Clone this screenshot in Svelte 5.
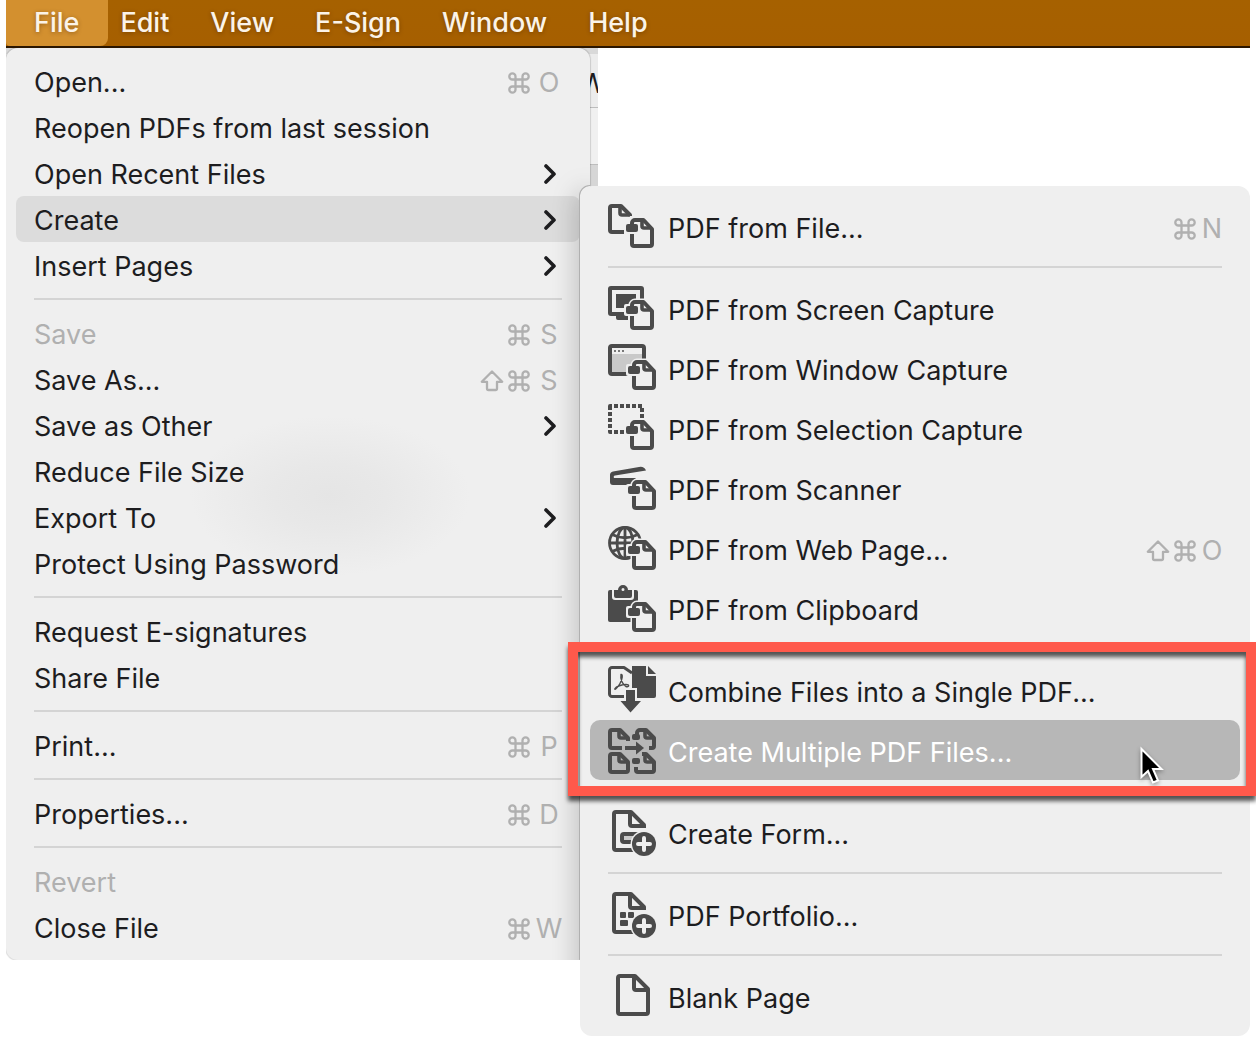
<script>
  const bar = ['File', 'Edit', 'View', 'E-Sign', 'Window', 'Help'];

  const fileGroups = [
    [
      { label: 'Open...', keys: ['⌘', 'O'] },
      { label: 'Reopen PDFs from last session' },
      { label: 'Open Recent Files', more: true },
      { label: 'Create', more: true, open: true },
      { label: 'Insert Pages', more: true }
    ],
    [
      { label: 'Save', keys: ['⌘', 'S'], disabled: true },
      { label: 'Save As...', keys: ['⇧', '⌘', 'S'] },
      { label: 'Save as Other', more: true },
      { label: 'Reduce File Size' },
      { label: 'Export To', more: true },
      { label: 'Protect Using Password' }
    ],
    [{ label: 'Request E-signatures' }, { label: 'Share File' }],
    [{ label: 'Print...', keys: ['⌘', 'P'] }],
    [{ label: 'Properties...', keys: ['⌘', 'D'] }],
    [
      { label: 'Revert', disabled: true },
      { label: 'Close File', keys: ['⌘', 'W'] }
    ]
  ];

  const createGroups = [
    { items: [{ label: 'PDF from File...', icon: 'file', keys: ['⌘', 'N'] }] },
    {
      items: [
        { label: 'PDF from Screen Capture', icon: 'screen' },
        { label: 'PDF from Window Capture', icon: 'window' },
        { label: 'PDF from Selection Capture', icon: 'selection' },
        { label: 'PDF from Scanner', icon: 'scanner' },
        { label: 'PDF from Web Page...', icon: 'web', keys: ['⇧', '⌘', 'O'] },
        { label: 'PDF from Clipboard', icon: 'clipboard' }
      ]
    },
    {
      callout: true,
      items: [
        { label: 'Combine Files into a Single PDF...', icon: 'combine' },
        { label: 'Create Multiple PDF Files...', icon: 'multiple', hover: true }
      ]
    },
    { items: [{ label: 'Create Form...', icon: 'form' }] },
    { items: [{ label: 'PDF Portfolio...', icon: 'portfolio' }] },
    { items: [{ label: 'Blank Page', icon: 'blank' }] }
  ];
</script>

{#snippet shortcut(keys)}
  <span class="keys">
    {#each keys as key}
      <kbd>
        {#if key === '⇧'}
          <svg class="key-icon" viewBox="0 0 24 24" role="img" aria-label="Shift">
            <path d="M12 2.5 1.8 12.8H7V19.5a1.5 1.5 0 0 0 1.5 1.5h7a1.5 1.5 0 0 0 1.5-1.5V12.8h5.2Z" />
          </svg>
        {:else if key === '⌘'}
          <svg class="key-icon" viewBox="0 0 24 24" role="img" aria-label="Command">
            <path d="M8.5 15.5V5.4A3.1 3.1 0 1 0 5.4 8.5H18.6A3.1 3.1 0 1 0 15.5 5.4V18.6A3.1 3.1 0 1 0 18.6 15.5H5.4A3.1 3.1 0 1 0 8.5 18.6Z" />
          </svg>
        {:else}
          {key}
        {/if}
      </kbd>
    {/each}
  </span>
{/snippet}

{#snippet badge(x, y)}
  <g transform="translate({x} {y})">
    <path class="halo" d="M2 14V26a2 2 0 0 0 2 2h16a2 2 0 0 0 2-2V10L14 2H5a3 3 0 0 0-3 3Z" />
    <rect class="clear" x="-6" y="4" width="15" height="12" rx="2" />
    <path class="line" d="M2 16V26a2 2 0 0 0 2 2h16a2 2 0 0 0 2-2V11L13.5 2H5a3 3 0 0 0-3 3V8" />
    <path class="line thin" d="M12 3V8a2 2 0 0 0 2 2h7" />
    <rect class="solid" x="-4" y="6" width="12" height="8" rx="2" />
  </g>
{/snippet}

{#snippet plus()}
  <circle class="clear" cx="36" cy="34" r="13.5" />
  <circle class="solid" cx="36" cy="34" r="12" />
  <path class="cross" d="M36 28v12M30 34h12" />
{/snippet}

{#snippet icon(name)}
  <svg class="icon" viewBox="0 0 48 48" aria-hidden="true">
    {#if name === 'file'}
      <path class="line" d="M16 28H4a2 2 0 0 1-2-2V4a2 2 0 0 1 2-2H13L22 11V12" />
      <path class="line thin" d="M12 3V9a2 2 0 0 0 2 2h8" />
      {@render badge(22, 14)}
    {:else if name === 'screen'}
      <rect class="line" x="2" y="2" width="32" height="26" rx="1" />
      <path class="solid" d="M8 8H28V22H8ZM11 30H20V34H10a2 2 0 0 1-2-2V30Z" />
      {@render badge(22, 14)}
    {:else if name === 'window'}
      <rect class="line tint" x="2" y="0" width="34" height="28" rx="2" />
      <path class="clear" d="M4 2H34V8H4Z" />
      <path class="dots" d="M6 5h2M10 5h2M14 5h2" />
      {@render badge(24, 14)}
    {:else if name === 'selection'}
      <rect class="line dashed" x="2" y="0" width="32" height="26" />
      {@render badge(22, 14)}
    {:else if name === 'scanner'}
      <path class="solid" d="M2 9Q2 6 5 5.4L31 1Q36 0 38 4.5L7 9.5Q5 10 6 12H28L22 19H5Q2 19 2 16Z" />
      {@render badge(24, 14)}
    {:else if name === 'web'}
      <circle class="globe" cx="17" cy="17" r="15.5" />
      <path class="globe" d="M17 1V33M1.5 17H32.5M4 8.5Q17 15 30 8.5M4 25.5Q17 19 30 25.5" />
      <ellipse class="globe" cx="17" cy="17" rx="8" ry="15.5" />
      {@render badge(24, 14)}
    {:else if name === 'clipboard'}
      <rect class="solid" x="0" y="4" width="30" height="32" rx="2" />
      <path class="clear" d="M4 3H26V11a3 3 0 0 1-3 3H7a3 3 0 0 1-3-3Z" />
      <path class="solid" fill-rule="evenodd" d="M6 4H10A5 5 0 0 1 20 4H24V10a2 2 0 0 1-2 2H8a2 2 0 0 1-2-2ZM13.5 3.5a1.5 1.5 0 0 0 3 0 1.5 1.5 0 0 0-3 0Z" />
      {@render badge(24, 16)}
    {:else if name === 'combine'}
      <path class="line fine" d="M25 28.5H4a2.5 2.5 0 0 1-2.5-2.5V2A2.5 2.5 0 0 1 4-.5H16L24 5" />
      <path class="curve" d="M13 6.5C15 6 14.5 11 12 15.5S6 22.5 7 20.5 14 16.5 18 16.5 21 19.5 18 18.5 12 11 13 6.5Z" />
      <path class="solid" d="M24-2H38V8H48V28a2 2 0 0 1-2 2H24ZM40-2 48 6H40Z" />
      <path class="arrow-edge" d="M18 22h9V33h6L22.5 44.5 12.5 33H18Z" />
      <path class="solid" d="M18 22h9V33h6L22.5 44.5 12.5 33H18Z" />
    {:else if name === 'multiple'}
      <path class="line" d="M14 20H4a2 2 0 0 1-2-2V4a2 2 0 0 1 2-2H12L20 10V13" />
      <path class="line thin" d="M11 3V8a2 2 0 0 0 2 2h6" />
      <path class="line" d="M29 10V5a3 3 0 0 1 3-3h6l8 8V18a2 2 0 0 1-2 2H41" />
      <path class="line thin" d="M37 3V8a2 2 0 0 0 2 2h6" />
      <rect class="solid" x="24" y="6" width="8" height="6" rx="2" />
      <path class="line" d="M2 28a2 2 0 0 1 2-2H12L20 34V42a2 2 0 0 1-2 2H4a2 2 0 0 1-2-2Z" />
      <path class="line thin" d="M11 27V32a2 2 0 0 0 2 2h6" />
      <path class="line" d="M28 39V42a2 2 0 0 0 2 2H44a2 2 0 0 0 2-2V34L38 26H34" />
      <path class="line thin" d="M37 27V32a2 2 0 0 0 2 2h6" />
      <rect class="solid" x="24" y="30" width="8" height="6" rx="2" />
      <path class="line" d="M17 20H29" />
      <path class="solid" d="M28 13.5 36 20 28 26.5Z" />
    {:else if name === 'form'}
      <path class="line" d="M30 40H8a2 2 0 0 1-2-2V4a2 2 0 0 1 2-2H23L36 15V18M22 3V14a2 2 0 0 0 2 2H35" />
      <rect class="line tint" x="14" y="24" width="18" height="8" rx="2" />
      {@render plus()}
    {:else if name === 'portfolio'}
      <path class="line" d="M30 40H8a2 2 0 0 1-2-2V4a2 2 0 0 1 2-2H23L36 15V18M22 3V14a2 2 0 0 0 2 2H35" />
      <rect class="solid" x="12" y="20" width="6" height="6" rx="1" />
      <rect class="solid" x="20" y="20" width="6" height="6" rx="1" />
      <rect class="solid" x="12" y="28" width="8" height="6" rx="1" />
      {@render plus()}
    {:else}
      <path class="line" d="M10 4a2 2 0 0 1 2-2H27L40 15V38a2 2 0 0 1-2 2H12a2 2 0 0 1-2-2ZM26 3V14a2 2 0 0 0 2 2H39" />
    {/if}
  </svg>
{/snippet}

<div class="screen">
  <nav class="menubar" aria-label="Application menu">
    {#each bar as name, i}
      <button type="button" class:active={i === 0}>{name}</button>
    {/each}
  </nav>

  <div class="stage">
    <div class="backdrop" aria-hidden="true"><span>W</span></div>

    <div class="menu file-menu" role="menu" aria-label="File">
      {#each fileGroups as group}
        <div class="group" role="group">
          {#each group as item}
            <button type="button" role="menuitem" class="row" class:open={item.open} disabled={item.disabled}>
              <span class="label">{item.label}</span>
              {#if item.keys}{@render shortcut(item.keys)}{/if}
              {#if item.more}
                <svg class="chevron" viewBox="0 0 12 20" aria-hidden="true"><path d="M2 2 10 10 2 18" /></svg>
              {/if}
            </button>
          {/each}
        </div>
      {/each}
    </div>

    <div class="menu create-menu" role="menu" aria-label="Create">
      {#each createGroups as group}
        <div class="group" class:callout={group.callout} role="group">
          {#each group.items as item}
            <button type="button" role="menuitem" class="row tall" class:hover={item.hover}>
              {@render icon(item.icon)}
              <span class="label">{item.label}</span>
              {#if item.keys}{@render shortcut(item.keys)}{/if}
              {#if item.hover}
                <svg class="pointer" viewBox="0 0 24 38" aria-hidden="true">
                  <path d="M1.5 2V30L8 24 13 35.5 18 33.5 13 22H21.5Z" />
                </svg>
              {/if}
            </button>
          {/each}
        </div>
      {/each}
    </div>
  </div>
</div>

<style>
  :global(body) {
    background: #fff;
  }

  .screen {
    padding: 0 6px;
    font-family: Inter, 'Liberation Sans', sans-serif;
    font-size: 27px;
    line-height: 32px;
    color: #1d1d1f;
  }

  button {
    border: 0;
    margin: 0;
    background: none;
    font: inherit;
    color: inherit;
    text-align: left;
    white-space: nowrap;
  }

  .menubar {
    display: flex;
    height: 46px;
    border-bottom: 2px solid #2a1600;
    background: linear-gradient(#a66100, #a65f00);
  }

  .menubar button {
    padding: 0 29px 0 12px;
    font-weight: 500;
    color: #fbf3e8;
    text-shadow: 0 1px 4px rgba(60, 30, 0, 0.4);
  }

  .menubar button.active {
    padding-left: 28px;
    border-radius: 0 0 8px 4px;
    background: #d3902f;
  }

  .stage {
    position: relative;
    display: flex;
    align-items: flex-start;
  }

  .backdrop {
    position: absolute;
    top: 0;
    left: 0;
    width: 592px;
    height: 150px;
    overflow: hidden;
    text-align: right;
    background: linear-gradient(#d9d9d9 6px, #ececec 6px 59px, #bdbdbd 59px 60px, #f0f0f0 60px 116px, #bdbdbd 116px 117px, #d6d6d6 117px);
  }

  .backdrop span {
    display: block;
    margin: 20px -8px 0 0;
  }

  .menu {
    position: relative;
    box-sizing: border-box;
    padding: 10px 0;
    border-radius: 12px;
    background: #efefef;
  }

  .file-menu {
    flex: none;
    width: 584px;
    overflow: hidden;
    box-shadow: 0 0 1px 1px rgba(0, 0, 0, 0.14);
    clip-path: inset(0 -2px 0 0);
    background: radial-gradient(ellipse 140px 80px at 324px 448px, #e5e5e5, #e8e8e8 40%, #efefef) #efefef;
  }

  /* Shade cast on the File menu by the open submenu */
  .file-menu::after {
    content: '';
    position: absolute;
    top: 138px;
    right: 0;
    bottom: -40px;
    width: 10px;
    border-radius: 12px 0 0 0;
    box-shadow: 0 0 0 1px #b0b0b0, 0 4px 26px rgba(0, 0, 0, 0.4);
  }

  .create-menu {
    flex: 1;
    min-width: 0;
    margin: 138px 0 0 -10px;
  }

  .group + .group::before {
    content: '';
    display: block;
    height: 2px;
    margin: 10px 28px;
    background: #d4d4d4;
  }

  .row {
    position: relative;
    display: flex;
    align-items: center;
    box-sizing: border-box;
    width: calc(100% - 20px);
    height: 46px;
    margin: 0 10px;
    padding: 2px 18px 0;
    border-radius: 8px;
  }

  .row:disabled {
    color: #b0b0b0;
  }

  .row.open {
    background: #dcdcdc;
  }

  .tall {
    height: 60px;
    padding: 4px 18px 0;
    border-radius: 10px;
  }

  .tall.hover {
    background: #b7b7b7;
    color: #fff;
  }

  .label {
    flex: 1;
    padding-top: 2px;
  }

  .keys {
    display: flex;
    gap: 3px;
    color: #b0b0b0;
  }

  .keys kbd {
    display: flex;
    align-items: center;
    justify-content: center;
    width: 24px;
    padding-top: 1px;
    font: inherit;
  }

  .file-menu .keys kbd:last-child {
    margin: 0 1px 0 3px;
  }

  .create-menu .keys {
    margin-right: -2px;
  }

  .key-icon {
    flex: none;
    width: 24px;
    height: 24px;
    fill: none;
    stroke: currentColor;
    stroke-width: 2.3;
    stroke-linejoin: round;
  }

  .chevron {
    width: 12px;
    height: 20px;
    margin-right: 6px;
    fill: none;
    stroke: #1d1d1f;
    stroke-width: 3.6;
    stroke-linecap: round;
    stroke-linejoin: round;
  }

  .icon {
    flex: none;
    width: 48px;
    height: 48px;
    margin-right: 12px;
    overflow: visible;
  }

  .solid {
    fill: #4b4b4b;
  }

  .clear {
    fill: #efefef;
  }

  .halo {
    fill: #efefef;
    stroke: #efefef;
    stroke-width: 7;
    stroke-linejoin: round;
  }

  .line {
    fill: none;
    stroke: #4b4b4b;
    stroke-width: 4;
    stroke-linecap: butt;
    stroke-linejoin: round;
  }

  .line.thin {
    stroke-width: 3.6;
  }

  .line.fine {
    stroke-width: 3;
  }

  .line.tint {
    fill: #c9c9c9;
  }

  .line.dashed {
    stroke-dasharray: 4 2;
    stroke-dashoffset: 2;
  }

  .dots {
    stroke: #777;
    stroke-width: 2;
  }

  .globe {
    fill: none;
    stroke: #4b4b4b;
    stroke-width: 2.8;
  }

  .curve {
    fill: none;
    stroke: #4b4b4b;
    stroke-width: 1.4;
  }

  .arrow-edge {
    fill: #efefef;
    stroke: #efefef;
    stroke-width: 4;
  }

  .cross {
    stroke: #efefef;
    stroke-width: 4;
    stroke-linecap: round;
  }

  .callout {
    position: relative;
  }

  .callout::after {
    content: '';
    position: absolute;
    inset: -6px -6px -16px -12px;
    border: 10px solid #ff594b;
    filter: drop-shadow(0 5px 2px rgba(0, 0, 0, 0.65));
    pointer-events: none;
  }

  .pointer {
    position: absolute;
    top: 27px;
    right: 76px;
    width: 24px;
    height: 38px;
    overflow: visible;
    filter: drop-shadow(0 2px 2px rgba(0, 0, 0, 0.35));
  }

  .pointer path {
    fill: #000;
    stroke: #fff;
    stroke-width: 2;
  }
</style>
